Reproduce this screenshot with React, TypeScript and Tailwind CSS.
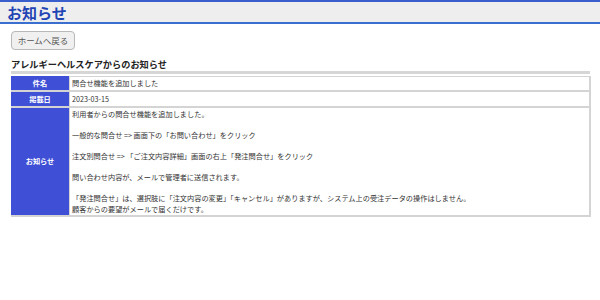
import React from "react";

const jp = { fontFamily: '"Noto Sans CJK JP", "Noto Sans", sans-serif' };

export default function App() {
  return (
    <div className="w-[600px] h-[300px] bg-white text-[#333]" style={jp}>
      <div className="h-[24px] bg-[#eeeeee] border-t-[2px] border-[#3a5fcd] border-b-[2px] border-b-[#3a6fd0] flex items-center pl-[7px]">
        <h1 className="text-[15px] font-bold text-[#1f45b5] leading-none">お知らせ</h1>
      </div>
      <div className="px-[11px]">
        <div className="mt-[7px] flex">
          <button className="w-[64px] h-[19px] rounded-[4px] border border-[#b8b8b8] bg-[#f0f0f0] text-[8.5px] text-[#555] leading-none">
            ホームへ戻る
          </button>
        </div>
        <h2 className="mt-[8px] text-[9.2px] font-bold text-[#222] leading-[12px]">アレルギーヘルスケアからのお知らせ</h2>
        <div className="h-[3px] bg-[#d6d6d6] w-[579px] mt-[1px]" />
        <table className="w-[580px] mt-[2px] border-separate border-spacing-0 border-r-2 border-b-2 border-[#d4d4d4] text-[7.2px]">
          <tbody>
            <tr>
              <th className="w-[58px] h-[16px] bg-[#3f4fd6] text-white font-bold border-b-2 border-[#d4d4d4]">件名</th>
              <td className="pl-[2px] border-b-2 border-l border-t border-[#d4d4d4]">問合せ機能を追加しました</td>
            </tr>
            <tr>
              <th className="h-[16px] bg-[#3f4fd6] text-white font-bold border-b-2 border-[#d4d4d4]">掲載日</th>
              <td className="pl-[2px] border-b-2 border-l border-[#d4d4d4]">2023-03-15</td>
            </tr>
            <tr>
              <th className="bg-[#3f4fd6] text-white font-bold">お知らせ</th>
              <td className="pl-[2px] pt-[1px] pb-[1px] leading-[10.5px] border-l border-[#d4d4d4]">
                利用者からの問合せ機能を追加しました。<br />
                <br />
                一般的な問合せ =&gt; 画面下の「お問い合わせ」をクリック<br />
                <br />
                注文別問合せ =&gt; 「ご注文内容詳細」画面の右上「発注問合せ」をクリック<br />
                <br />
                問い合わせ内容が、メールで管理者に送信されます。<br />
                <br />
                「発注問合せ」は、選択肢に「注文内容の変更」「キャンセル」がありますが、システム上の受注データの操作はしません。<br />
                顧客からの要望がメールで届くだけです。
              </td>
            </tr>
          </tbody>
        </table>
      </div>
    </div>
  );
}
